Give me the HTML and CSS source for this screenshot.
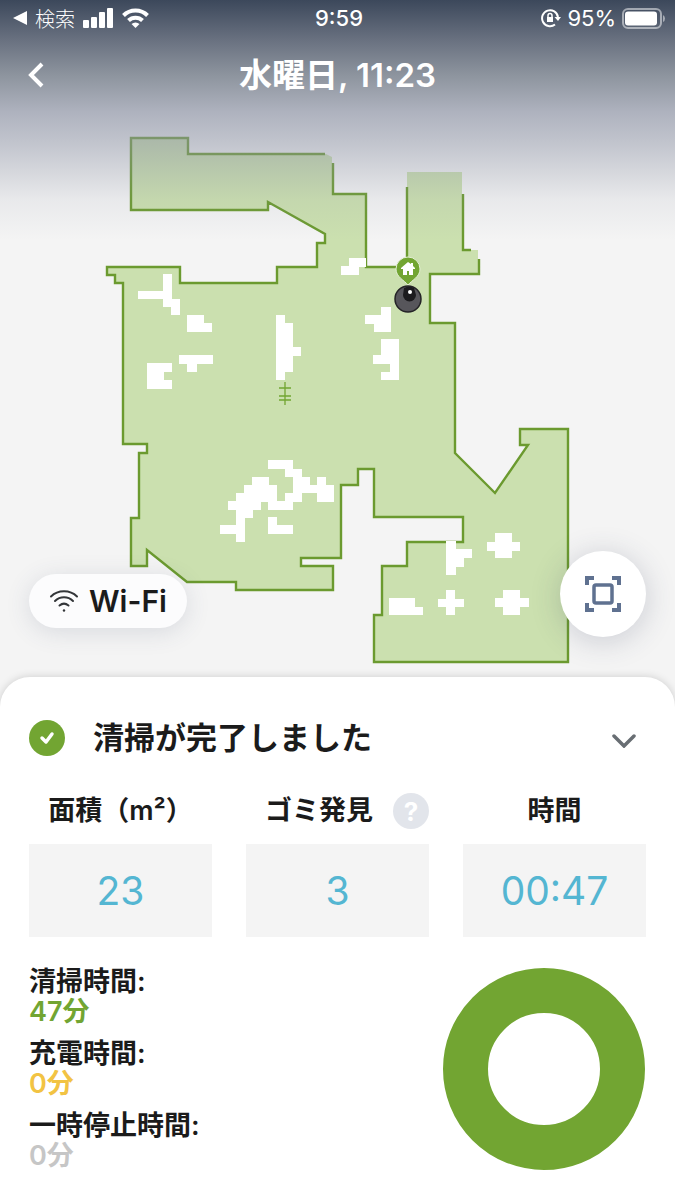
FILE: index.html
```html
<!DOCTYPE html>
<html lang="ja">
<head>
    <meta charset="UTF-8">
    <meta name="viewport" content="width=device-width, initial-scale=1.0">
    <title>水曜日, 11:23</title>
    <link rel="stylesheet" href="styles.css">
</head>
<body>
    <main class="map-area">
        <svg class="map" viewBox="0 0 675 677" aria-hidden="true">
            <!-- 清掃済みエリア -->
            <path class="floor" d="M131 138H188V154H326L332 157V194H366V267H407V172H462V250H478V274H430V323H455V453L495 493L528 445H520V429H568V662H374V615H382V566H407V542H463V517H374V469H358V485H341V558H301V566H333V590H236V582H187L147 550V566H131V518H139V453H147V444H123V283H115V275H107V267H180V283H277V267H317V243H325V234L268 202V210H131Z"/>
            <!-- 壁 -->
            <path class="wall" d="M325 154H188V138H131V210H268V202L325 234V243H317V267H277V283H180V267H107V275H115V283H123V444H147V453H139V518H131V566H147V550L187 582H236V590H333V566H301V558H341V485H358V469H374V517H463V542H407V566H382V615H374V662H568V429H520V445H528L495 493L455 453V323H430V274H479V259M471 250H463V194M407 187V267H366V194H333V163"/>
            <!-- 家具など -->
            <path class="obstacle" d="M163 274h9v25h8v16h-9v-8h-8v-8h-25v-8h25z
                M349 258h17v9h-7v8h-18v-9h8z
                M381 307h10v25h-17v-8h-9v-9h16z
                M381 339h18v41h-18v-8h9v-8h-17v-9h8z
                M187 315h17v8h8v9h-25z
                M179 355h34v9h-16v8h-10v-8h-8z
                M147 363h25v9h-8v8h8v9h-25z
                M276 315h9v8h8v24h8v9h-8v16h-8v8h-9z
                M268 460H293V469H302V477H310V485H317V477H326V485H334V502H317V493H302V502H293V510H268V502H261V510H253V518H245V542H236V534H220V525H236V510H228V501H236V493H244V485H252V477H269V485H277V501H285V493H293V477H285V469H268z
                M268 517h9v8h16v9h-25z
                M446 541h10v8h16v9h-8v9h-8v8h-10z
                M495 533h17v9h8v9h-8v7h-17v-7h-8v-9h8z
                M389 598h26v9h8v8h-34z
                M446 590h9v9h9v8h-9v8h-9v-8h-8v-8h8z
                M503 590h17v8h9v9h-9v8h-17v-8h-8v-9h8z"/>
            <path class="dirt" d="M285 382v23M279 388h12M279 396h12M279 400h12"/>
            <!-- 充電ドック -->
            <path class="dock" d="M408 285c-4-5-12-8-12-16a12 12 0 0 1 24 0c0 8-8 11-12 16z"/>
            <path class="dock-home" d="M408 262l-7 6v1h2v6h4v-4h2v4h4v-6h2v-1l-2-2v-3h-2v1z"/>
            <!-- ロボット -->
            <circle class="robot" cx="408" cy="299" r="13"/>
            <path class="robot-top" d="M404 288q5-3 10 0l2 7a6 6 0 0 1-13 0z"/>
            <circle class="robot-light" cx="410" cy="292" r="2"/>
        </svg>

        <header class="top">
            <div class="status">
                <div class="status-left">
                    <svg width="14" height="14" viewBox="0 0 14 14"><path d="M0 7L14 0V14Z" fill="#fff"/></svg>
                    <span class="status-app">検索</span>
                    <svg class="signal" width="31" height="20" viewBox="0 0 31 20" fill="#fff"><rect y="12" width="6" height="8" rx="1"/><rect x="8" y="9" width="6" height="11" rx="1"/><rect x="16" y="4" width="6" height="16" rx="1"/><rect x="24" width="6" height="20" rx="1"/></svg>
                    <svg width="27" height="20" viewBox="0 0 27 20" fill="none" stroke="#fff" stroke-width="4"><path d="M1.500 7.500a17 17 0 0 1 24 0"/><path d="M6.500 12.500a10 10 0 0 1 14 0"/><path d="M13.500 20l-4-4a6 6 0 0 1 8 0z" fill="#fff" stroke="none"/></svg>
                </div>
                <div class="status-time">9:59</div>
                <div class="status-right">
                    <svg width="20" height="20" viewBox="0 0 20 20" fill="none" stroke="#fff" stroke-width="2"><path d="M14 16.500A8 8 0 1 1 17 9"/><path d="M13.500 9h6.500l-3 4z" fill="#fff" stroke="none"/><rect x="6" y="9" width="6" height="5" fill="#fff" stroke="none"/><path d="M7 9V7.500a2 2 0 0 1 4 0V9" stroke-width="1.500"/></svg>
                    <span>95%</span>
                    <svg width="43" height="21" viewBox="0 0 43 21"><rect x="1" y="1" width="38" height="19" rx="5" fill="none" stroke="#fff" stroke-opacity=".5" stroke-width="2"/><rect x="3" y="3.500" width="32" height="14" rx="3" fill="#fff"/><path d="M41 7q2 1 2 3.500T41 14z" fill="#fff" fill-opacity=".5"/></svg>
                </div>
            </div>
            <div class="title-bar">
                <button class="back" type="button" aria-label="戻る">
                    <svg width="16" height="26" viewBox="0 0 16 26" fill="none" stroke="#fff" stroke-width="4"><path d="M14 2L3 13L14 24"/></svg>
                </button>
                <h1>水曜日, 11:23</h1>
            </div>
        </header>

        <div class="map-buttons">
            <button class="wifi-button" type="button">
                <svg width="30" height="24" viewBox="0 0 30 24" fill="none" stroke="#333639" stroke-width="2" stroke-linecap="round"><path d="M2 7.500C9 .500 21 .500 28 7.500"/><path d="M6 12c5-5 13-5 18 0"/><path d="M10.500 16.500c3-2.500 6-2.500 9 0"/><circle cx="15" cy="21.500" r="1.200" fill="#333639" stroke="none"/></svg>
                Wi-Fi
            </button>
            <button class="fit-button" type="button" aria-label="全体表示">
                <svg width="36" height="36" viewBox="0 0 36 36" fill="none" stroke="#5f7190"><path stroke-width="4" d="M2 9V2H9M27 2H34V9M34 27V34H27M9 34H2V27"/><rect x="9" y="9" width="18" height="18" rx="2" stroke-width="3.500"/></svg>
            </button>
        </div>
    </main>

    <section class="sheet">
        <div class="result">
            <svg width="36" height="36" viewBox="0 0 36 36"><circle cx="18" cy="18" r="18" fill="#72a532"/><path d="M13 18l4 4 6-8" fill="none" stroke="#fff" stroke-width="3.500" stroke-linecap="round" stroke-linejoin="round"/></svg>
            <h2>清掃が完了しました</h2>
            <button class="toggle" type="button" aria-label="閉じる">
                <svg width="24" height="14" viewBox="0 0 24 14" fill="none" stroke="#686e73" stroke-width="3.500" stroke-linecap="round"><path d="M2 2L12 12L22 2"/></svg>
            </button>
        </div>

        <div class="stats">
            <div class="stat">
                <h3>面積（m²）</h3>
                <div class="value">23</div>
            </div>
            <div class="stat">
                <div class="stat-title">
                    <h3>ゴミ発見</h3>
                    <button class="help" type="button" aria-label="ヘルプ">?</button>
                </div>
                <div class="value">3</div>
            </div>
            <div class="stat">
                <h3>時間</h3>
                <div class="value">00:47</div>
            </div>
        </div>

        <div class="breakdown">
            <dl class="times">
                <div>
                    <dt>清掃時間:</dt>
                    <dd class="cleaning">47分</dd>
                </div>
                <div>
                    <dt>充電時間:</dt>
                    <dd class="charging">0分</dd>
                </div>
                <div>
                    <dt>一時停止時間:</dt>
                    <dd class="paused">0分</dd>
                </div>
            </dl>
            <div class="donut"></div>
        </div>
    </section>
</body>
</html>
```
FILE: styles.css
```css
* {
    box-sizing: border-box;
}
body {
    margin: 0;
    background: #f4f4f4;
    color: #1b1b1b;
    font-family: Inter, "Noto Sans CJK JP", sans-serif;
}
h1, h2, h3, dl, dd {
    margin: 0;
}
svg {
    display: block;
    flex: none;
}
button {
    font-family: inherit;
    color: inherit;
    background: none;
    border: none;
    padding: 0;
    cursor: pointer;
}

/* マップ */
.map-area {
    display: grid;
}
.map,
.top,
.map-buttons {
    grid-area: 1 / 1;
}
.map {
    width: 100%;
}
.floor {
    fill: #cbe0af;
}
.wall {
    fill: none;
    stroke: #6b9a2f;
    stroke-width: 2.4;
}
.obstacle {
    fill: #fff;
}
.dirt {
    fill: none;
    stroke: #72a532;
    stroke-width: 1.3;
}
.dock {
    fill: #72a532;
    stroke: #e4efd6;
    stroke-width: 1;
}
.dock-home,
.robot-light {
    fill: #fff;
}
.robot {
    fill: #57565b;
    stroke: #252427;
    stroke-width: 1.5;
}
.robot-top {
    fill: #1c1b1e;
}

/* 上部 */
.top {
    align-self: start;
    height: 240px;
    color: #fff;
    background: linear-gradient(rgb(60, 72, 91) 0, rgb(105, 113, 128) 40px, rgb(141, 148, 158) 75px, rgba(140, 146, 164, 0.67) 112px, rgba(140, 146, 164, 0.48) 144px, rgba(140, 146, 164, 0.11) 200px, rgba(140, 146, 164, 0) 240px);
}
.status {
    display: grid;
    grid-template-columns: 1fr auto 1fr;
    align-items: center;
    height: 36px;
    padding: 0 10px 0 13px;
    font-size: 22px;
}
.status-left,
.status-right {
    display: flex;
    align-items: center;
    gap: 8px;
}
.status-right {
    justify-content: flex-end;
    gap: 6px;
}
.status-app {
    font-size: 20px;
    font-weight: 300;
}
.status-time {
    font-weight: 500;
}
.title-bar {
    display: grid;
    grid-template-columns: 40px 1fr 40px;
    align-items: center;
    height: 78px;
    padding: 0 16px;
}
.back {
    display: flex;
    align-items: center;
    justify-content: center;
    height: 40px;
}
h1 {
    font-size: 33px;
    font-weight: 600;
    line-height: 40px;
    text-align: center;
}

.map-buttons {
    align-self: end;
    display: flex;
    align-items: center;
    justify-content: space-between;
    padding: 0 29px 40px;
}
.wifi-button {
    display: flex;
    align-items: center;
    gap: 10px;
    height: 54px;
    margin-top: 14px;
    padding: 0 20px;
    border-radius: 27px;
    background: #fcfcfd;
    box-shadow: 0 4px 24px rgba(60, 72, 110, 0.15);
    font-size: 30px;
    font-weight: 600;
}
.fit-button {
    display: flex;
    align-items: center;
    justify-content: center;
    width: 86px;
    height: 86px;
    border-radius: 50%;
    background: #fff;
    box-shadow: 0 4px 30px rgba(50, 60, 90, 0.22);
}

/* 結果シート */
.sheet {
    position: relative;
    padding: 40px 29px 30px;
    border-radius: 30px 30px 0 0;
    background: #fff;
    box-shadow: 0 0 8px rgba(0, 0, 0, 0.16);
}
.result {
    display: flex;
    align-items: center;
    gap: 28px;
    height: 42px;
}
h2 {
    flex: 1;
    font-size: 31px;
    font-weight: 600;
    line-height: 42px;
}
.toggle {
    padding: 14px 10px 8px;
}
.stats {
    display: grid;
    grid-template-columns: repeat(3, 1fr);
    gap: 34px;
    margin-top: 32px;
}
h3 {
    font-size: 27px;
    font-weight: 600;
    line-height: 40px;
    text-align: center;
    white-space: nowrap;
}
.stat-title {
    display: flex;
    align-items: center;
    justify-content: flex-end;
    gap: 20px;
}
.help {
    width: 36px;
    height: 36px;
    border-radius: 50%;
    background: #e2e5eb;
    color: #fff;
    font-size: 26px;
    font-weight: 700;
}
.value {
    display: flex;
    align-items: center;
    justify-content: center;
    height: 93px;
    margin-top: 13px;
    background: #f4f4f4;
    color: #54b6d2;
    font-size: 39px;
}
.breakdown {
    display: flex;
    align-items: center;
    justify-content: space-between;
    margin-top: 30px;
}
.times {
    display: grid;
    gap: 12px;
    font-size: 27px;
    font-weight: 600;
    line-height: 30px;
}
.cleaning {
    color: #72a532;
}
.charging {
    color: #f2c343;
}
.paused {
    color: #c6c6c6;
}
.donut {
    width: 202px;
    height: 202px;
    margin-right: 1px;
    border: 45px solid #72a532;
    border-radius: 50%;
}
```
